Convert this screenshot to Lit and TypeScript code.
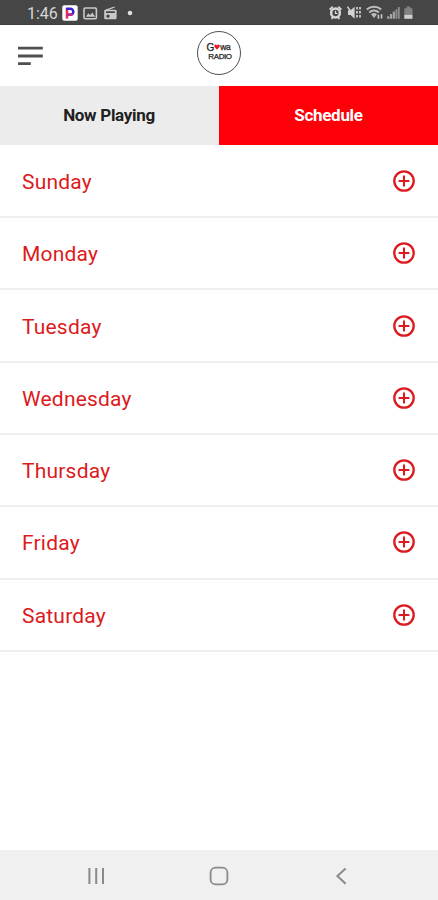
import { LitElement, html, css } from "lit";
import { customElement, property } from "lit/decorators.js";

@customElement("status-bar")
class StatusBar extends LitElement {
  static styles = css`
    :host { display: flex; align-items: center; height: 25px; background: #464646; box-sizing: border-box; padding: 0 24px 0 27px; color: #d6d6d6; border-bottom: 1px solid #3f3f3f; }
    .time { font: 400 16px/25px Roboto, sans-serif; width: 35px; padding-top: 2px; white-space: nowrap; }
    .left { display: block; }
    .right { display: block; margin-left: auto; }
  `;
  render() {
    return html`
      <span class="time">1:46</span>
      <svg class="left" width="76" height="25" viewBox="62 0 76 25">
        <rect x="62.3" y="5.3" width="15.4" height="15.4" rx="2" fill="#fff" />
        <path d="M67 18.6V8.2" stroke="#e8305a" stroke-width="2.6" fill="none" />
        <path d="M66 8.7h4.3a3 3 0 0 1 0 6.1h-2.6" stroke="#3b22d8" stroke-width="2.5" fill="none" />
        <path d="M72.6 13.8a3 3 0 0 1-2.3 1H68" stroke="#c02890" stroke-width="2.5" fill="none" />
        <rect x="84" y="8" width="12.4" height="10.8" rx="1.2" fill="none" stroke="#c9c9c9" stroke-width="1.6" />
        <path d="M85.8 16.8l2.6-3.6 1.8 2 2-2.8 3 4.4z" fill="#c9c9c9" />
        <path d="M106 10.2l8.6-3.2" stroke="#c9c9c9" stroke-width="1.3" />
        <path fill-rule="evenodd" d="M105.4 9.8h10a1.2 1.2 0 0 1 1.2 1.2v7a1.2 1.2 0 0 1-1.2 1.2h-10a1.2 1.2 0 0 1-1.2-1.2v-7a1.2 1.2 0 0 1 1.2-1.2zM106 11.3v1.6h8.8v-1.6zM108 14.4a1.7 1.7 0 1 0 .01 0z" fill="#c9c9c9" />
        <circle cx="130" cy="13" r="2.3" fill="#dedede" />
      </svg>
      <svg class="right" width="86" height="25" viewBox="328 0 86 25">
        <circle cx="335.5" cy="13" r="4.4" fill="none" stroke="#d6d6d6" stroke-width="2.5" />
        <path d="M329.6 9.6l3.1-3M341.4 9.6l-3.1-3M331.5 18.8l1.5-1.8M339.5 18.8L338 17" stroke="#d6d6d6" stroke-width="1.8" />
        <path d="M335.5 10.8v2.5h2" stroke="#d6d6d6" stroke-width="1.2" fill="none" />
        <path d="M348 10.3h2.6l4-3.6v12l-4-3.6H348z" fill="#d2d2d2" />
        <path d="M347.4 6.8l3.6 4.6" stroke="#d2d2d2" stroke-width="1.5" />
        <path d="M357 7v12M360 7v12" stroke="#c9c9c9" stroke-width="1.8" stroke-dasharray="2.6 1.4" />
        <path d="M366.8 9.6a10.8 10.8 0 0 1 14.4 0M369.2 12.4a7.2 7.2 0 0 1 9.6 0" fill="none" stroke="#bcbcbc" stroke-width="2" />
        <path d="M371 14.3a4.5 4.5 0 0 1 6 0l-3 3.8z" fill="#bcbcbc" />
        <path d="M378.4 18.8v-4M381.5 14.2v4.4" stroke="#c9c9c9" stroke-width="1.6" />
        <path d="M388.2 18.8v-2.6M391 18.8v-4.8M393.8 18.8v-7.2" stroke="#a8a8a8" stroke-width="2.1" />
        <path d="M396.4 18.8V9.2M398.8 18.8V7" stroke="#8c8c8c" stroke-width="1.9" />
        <path d="M406.6 6.4h3.6v1.8h2.3V15h-8.2V8.2h2.3z" fill="#818181" />
        <path d="M404.3 14.9h8.2v3.9h-8.2z" fill="#cfcfcf" />
      </svg>`;
  }
}

@customElement("station-logo")
class StationLogo extends LitElement {
  static styles = css`
    :host { display: block; }
    .badge { width: 44px; height: 44px; box-sizing: border-box; border: 1px solid #505050; border-radius: 50%; background: #fff; display: flex; flex-direction: column; align-items: center; padding-top: 11px; font-family: "Liberation Sans", sans-serif; font-weight: 400; color: #222; }
    .top { display: flex; align-items: center; height: 9px; font-size: 10px; line-height: 9px; margin-right: 1px; -webkit-text-stroke: 0.25px #222; }
    .heart { display: block; margin: 0 0 1px; }
    .bottom { height: 9px; font-size: 8px; line-height: 9px; letter-spacing: -0.4px; margin-left: 2px; -webkit-text-stroke: 0.25px #222; }
    .small { font-size: 8.5px; letter-spacing: -0.4px; }
  `;
  render() {
    return html`<div class="badge">
      <div class="top">
        <span>G</span>
        <svg class="heart" width="6" height="6" viewBox="0 0 6 6"><path d="M3 5.7L.5 3C-.6 1 2 -.4 3 1.4 4 -.4 6.6 1 5.5 3z" fill="#e91c20" /></svg>
        <span class="small">wa</span>
      </div>
      <div class="bottom">RADIO</div>
    </div>`;
  }
}

@customElement("day-row")
class DayRow extends LitElement {
  @property() day = "";
  static styles = css`
    :host { display: flex; align-items: center; justify-content: space-between; box-sizing: border-box; height: 72.3px; padding: 0 22px; border-bottom: 2px solid #efefef; font: 400 21px/28px Roboto, sans-serif; letter-spacing: 0.2px; color: #dc1a20; }
    .name { padding-top: 2px; }
    svg { display: block; }
  `;
  render() {
    return html`<span class="name">${this.day}</span>
      <svg width="24" height="24" viewBox="0 0 24 24" fill="none" stroke="#dc1a20">
        <circle cx="12" cy="12" r="9.7" stroke-width="2.3" />
        <path d="M12 6.6v10.8M6.6 12h10.8" stroke-width="2" />
      </svg>`;
  }
}

@customElement("app-root")
class AppRoot extends LitElement {
  static styles = css`
    :host { display: flex; flex-direction: column; height: 900px; background: #fff; overflow: hidden; }
    .header { display: grid; grid-template-columns: 1fr auto 1fr; align-items: center; height: 60.5px; padding: 0 17px; box-sizing: border-box; }
    .menu { display: block; margin-top: 2px; }
    .logo { margin-top: -5px; }
    .tabs { display: grid; grid-template-columns: 1fr 1fr; height: 59.5px; font: 700 17px/59px Roboto, sans-serif; letter-spacing: -0.3px; text-align: center; }
    .tab { background: #edecec; color: #202020; padding-right: 1px; }
    .tab.active { background: #fd0008; color: #fff; padding-right: 0; }
    .days { flex: 1; padding-top: 0.8px; }
    .nav { box-sizing: border-box; display: flex; justify-content: space-between; align-items: center; height: 50px; padding: 2px 85px 0; background: #f0f0f0; }
    .nav svg { display: block; }
  `;
  render() {
    const days = ["Sunday", "Monday", "Tuesday", "Wednesday", "Thursday", "Friday", "Saturday"];
    return html`
      <status-bar></status-bar>
      <div class="header">
        <svg class="menu" width="27" height="22" viewBox="0 0 27 22">
          <path d="M1 3.2h24.8M1 11h24.8M1 18.6h12.8" stroke="#505050" stroke-width="2.8" />
        </svg>
        <station-logo class="logo"></station-logo>
      </div>
      <div class="tabs">
        <div class="tab">Now Playing</div>
        <div class="tab active">Schedule</div>
      </div>
      <div class="days">${days.map((d) => html`<day-row .day=${d}></day-row>`)}</div>
      <div class="nav">
        <svg width="22" height="22" viewBox="0 0 22 22" fill="none" stroke="#8a8a8a" stroke-width="2">
          <path d="M4.4 3v16M11.2 3v16M18 3v16" />
        </svg>
        <svg width="22" height="22" viewBox="0 0 22 22" fill="none" stroke="#8a8a8a" stroke-width="1.8">
          <rect x="2.6" y="2.6" width="16.8" height="16.8" rx="5" />
        </svg>
        <svg width="22" height="22" viewBox="0 0 22 22" fill="none" stroke="#8a8a8a" stroke-width="2">
          <path d="M14.6 3.4L6.4 11l8.2 7.8" />
        </svg>
      </div>`;
  }
}
